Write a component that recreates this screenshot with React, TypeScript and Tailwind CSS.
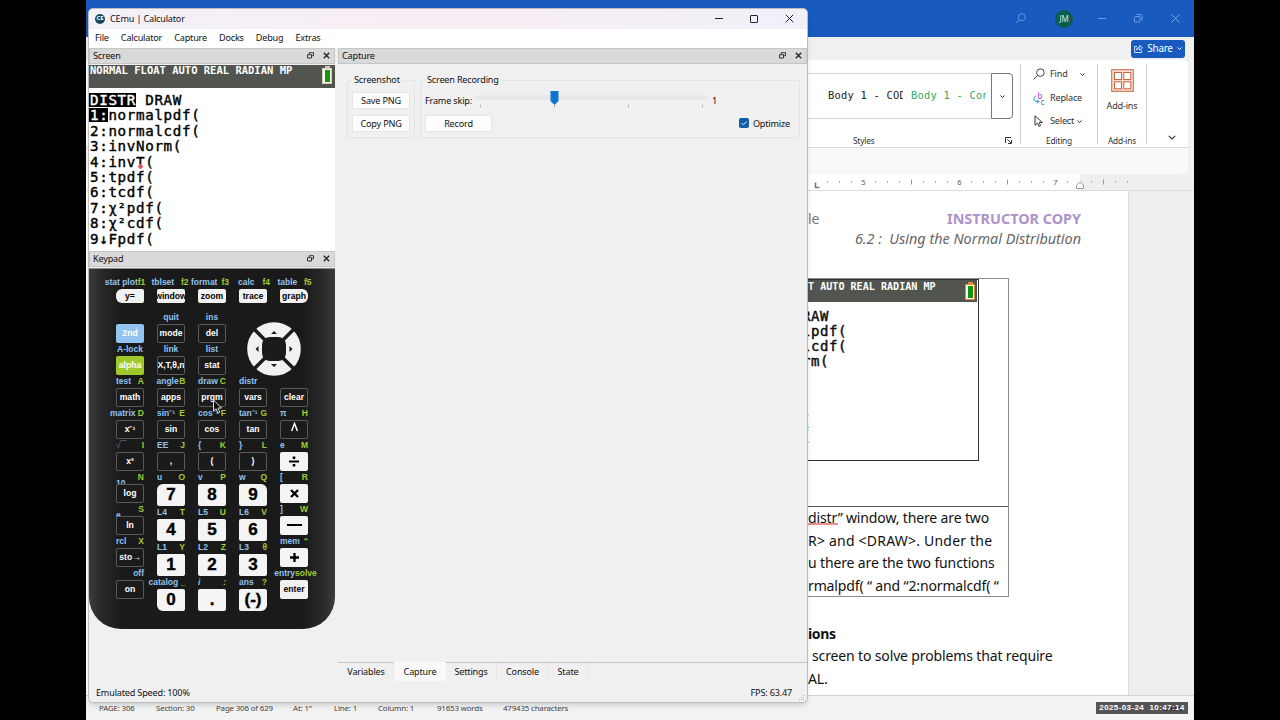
import React from "react";

type Label = { b?: string; g?: string; cls?: string };
type KeyDef = Label & { t: React.ReactNode; k?: string };

const DARK = "border border-[#5a5a5a] bg-[#1b1b1b] text-white text-[8.6px] rounded-[2px]";
const LIGHT = "bg-[#f1f1f1] text-black text-[8.6px] rounded-[2px]";
const OP = "bg-[#f4f4f4] text-black text-[17px] rounded-[2px]";

function Key({ def, tall }: { def: KeyDef; tall?: boolean }) {
  return (
    <div className="flex flex-col items-center">
      <div className="flex h-[13px] w-[28px] justify-center">
        <div
          className={
            "flex shrink-0 items-center whitespace-pre text-[8.5px] leading-[13px] " +
            (def.cls ?? "w-[28px] justify-between")
          }
        >
          {def.b !== undefined && <span className="text-[#8fc3ee]">{def.b}</span>}
          {def.g !== undefined && <span className="text-[#a0cc2e]">{def.g}</span>}
        </div>
      </div>
      <div
        className={
          "flex w-[28px] items-center justify-center overflow-hidden whitespace-nowrap " +
          (tall ? "h-[22px] bg-[#f4f4f4] text-[17px] text-black [-webkit-text-stroke:0.4px_#000] " : "h-[19px] ") +
          (tall ? def.k ?? "rounded-[2px]" : def.k ?? DARK)
        }
      >
        <span className="shrink-0">{def.t}</span>
      </div>
    </div>
  );
}

const C = "w-[28px] justify-center";

const topKeys: KeyDef[] = [
  { t: "y=", b: "stat plot", g: "f1", cls: "w-[52px] justify-center pr-[10px]", k: "rounded-l-[6px] rounded-r-[2px]" },
  { t: "window", b: "tblset", g: "f2", cls: "w-[37px] justify-between mr-[2px]", k: "rounded-[2px]" },
  { t: "zoom", b: "format", g: "f3", cls: "w-[38px] justify-between mr-[4px]", k: "rounded-[2px]" },
  { t: "trace", b: "calc", g: "f4", cls: "w-[32px] justify-between ml-[2px]", k: "rounded-[2px]" },
  { t: "graph", b: "table", g: "f5", cls: "w-[34px] justify-between ml-px", k: "rounded-l-[2px] rounded-r-[6px]" },
];

const col1: KeyDef[] = [
  { t: "2nd", b: " ", k: "bg-[#93c3f0] text-white text-[8.6px] rounded-[2px]" },
  { t: "alpha", b: "A-lock", cls: C, k: "bg-[#9fc92b] text-white text-[8.6px] rounded-[2px]" },
  { t: "math", b: "test", g: "A" },
  { t: <>x⁻¹</>, b: "matrix", g: "D", cls: "w-[34px] justify-between mr-[6px]" },
  { t: "x²", b: "√‾‾", g: "I", cls: "w-[28px] justify-between [&>span:first-child]:font-normal [&>span:first-child]:opacity-60" },
  { t: "log", b: "10", g: "N", cls: "w-[28px] justify-between [&>span:first-child]:mt-[8px] [&>span:first-child]:h-[9px]" },
  { t: "ln", b: "e", g: "S", cls: "w-[28px] justify-between [&>span:first-child]:mt-[9px] [&>span:first-child]:h-[9px]" },
  { t: "sto→", b: "rcl", g: "X" },
  { t: "on", b: "off", cls: "w-[28px] justify-end" },
];
const col2: KeyDef[] = [
  { t: "mode", b: "quit", cls: C },
  { t: "X,T,θ,n", b: "link", cls: C },
  { t: "apps", b: "angle", g: "B", cls: "w-[29px] justify-between" },
  { t: "sin", b: "sin⁻¹", g: "E" },
  { t: ",", b: "EE", g: "J" },
];
const col3: KeyDef[] = [
  { t: "del", b: "ins", cls: C },
  { t: "stat", b: "list", cls: C },
  { t: "prgm", b: "draw", g: "C" },
  { t: "cos", b: "cos⁻¹", g: "F" },
  { t: "(", b: "{", g: "K" },
];
const col4: KeyDef[] = [
  { t: "vars", b: "distr" },
  { t: "tan", b: "tan⁻¹", g: "G" },
  { t: ")", b: "}", g: "L" },
];
const num2: KeyDef[] = [
  { t: "7", b: "u", g: "O", k: "rounded-[2px] rounded-tl-[6px]" },
  { t: "4", b: "L4", g: "T" },
  { t: "1", b: "L1", g: "Y" },
  { t: "0", b: "catalog", g: "_", cls: "w-[37px] justify-between mr-[8px]", k: "rounded-[2px] rounded-bl-[6px]" },
];
const num3: KeyDef[] = [
  { t: "8", b: "v", g: "P" },
  { t: "5", b: "L5", g: "U" },
  { t: "2", b: "L2", g: "Z" },
  { t: ".", b: "i", g: ":", cls: "w-[28px] justify-between italic" },
];
const num4: KeyDef[] = [
  { t: "9", b: "w", g: "Q", k: "rounded-[2px] rounded-tr-[6px]" },
  { t: "6", b: "L6", g: "V" },
  { t: "3", b: "L3", g: "θ" },
  { t: "(-)", b: "ans", g: "?", k: "rounded-[2px] rounded-br-[6px]" },
];
const col5: KeyDef[] = [
  { t: "clear", b: " " },
  { t: <svg width="9" height="10" viewBox="0 0 9 10" className="mb-1"><path d="M1.6 9 4.5 1.5 7.4 9" fill="none" stroke="#fff" strokeWidth="1.5" /></svg>, b: "π", g: "H" },
  { t: <svg width="10" height="11" viewBox="0 0 10 11"><path d="M0 4.500h10v2H0zM3.700.5h2.600v2.600H3.700zM3.700 7.900h2.600v2.600H3.700z" /></svg>, b: "e", g: "M", k: OP },
  { t: <svg width="9" height="9" viewBox="0 0 9 9"><path d="m1 1 7 7M8 1 1 8" stroke="#000" strokeWidth="2.400" /></svg>, b: "[", g: "R", k: OP },
  { t: <div className="h-[1.5px] w-[15px] bg-black" />, b: "]", g: "W", k: OP },
  { t: <svg width="9" height="9" viewBox="0 0 9 9"><path d="M4.500 0v9M0 4.500h9" stroke="#000" strokeWidth="2.300" /></svg>, b: "mem", g: "“", k: OP },
  { t: "enter", b: "entry", g: "solve", cls: "w-[44px] justify-center ml-[3px]", k: LIGHT },
];

function Keys({ list, tall }: { list: KeyDef[]; tall?: boolean }) {
  return (
    <>
      {list.map((d, i) => (
        <Key key={i} def={d} tall={tall} />
      ))}
    </>
  );
}

function DPad() {
  return (
    <svg width="56" height="56" viewBox="-28 -28 56 56">
      <circle r="19.2" fill="none" stroke="#f1f1f1" strokeWidth="15.2" />
      <path d="M-20-20 20 20M20-20-20 20" stroke="#1b1b1b" strokeWidth="3.5" />
      <rect x="-12" y="-12" width="24" height="24" rx="8" fill="#1b1b1b" />
      <path d="M-3-15h6l-3-3zM-3 15h6l-3 3zM-15.500-3v6l-3-3zM15.500-3v6l3-3z" fill="#1b1b1b" />
    </svg>
  );
}

function Keypad() {
  return (
    <div className="relative mt-px flex h-[361px] w-[246px] flex-col rounded-b-[32px] border-t border-[#888] pl-[20.5px] pt-[7px] font-['Liberation_Sans',Arial,sans-serif] font-bold tracking-normal [background-image:linear-gradient(90deg,#3b3b3b_0%,#272727_6%,#1a1a1a_13%,#1a1a1a_87%,#272727_94%,#3b3b3b_100%)]">
      <div className="grid grid-cols-[repeat(5,41px)]">
        {topKeys.map((d, i) => (
          <div key={i} className="flex flex-col items-center">
            <div className="flex h-[13px] w-[28px] justify-center">
              <div className={"flex shrink-0 items-center whitespace-pre text-[8.5px] " + d.cls}>
                <span className="text-[#8fc3ee]">{d.b}</span>
                <span className="text-[#a0cc2e]">{d.g}</span>
              </div>
            </div>
            <div className={"flex h-[14px] w-[28px] items-center justify-center overflow-hidden bg-[#f1f1f1] text-[8.6px] text-black " + d.k}>
              <span className="shrink-0">{d.t}</span>
            </div>
          </div>
        ))}
      </div>
      <div className="mt-[7.5px] grid grid-cols-[repeat(3,41px)_82px]">
        <div><Keys list={col1} /></div>
        <div><Keys list={col2} /><Keys list={num2} tall /></div>
        <div><Keys list={col3} /><Keys list={num3} tall /></div>
        <div>
          <div className="flex h-[64px] justify-center pt-[10px]"><DPad /></div>
          <div className="grid grid-cols-[41px_41px]">
            <div><Keys list={col4} /><Keys list={num4} tall /></div>
            <div><Keys list={col5} /></div>
          </div>
        </div>
      </div>
      <svg className="absolute left-[123px] top-[130px]" width="11" height="16" viewBox="0 0 11 16">
        <path d="M1.500 1v11l2.600-2.300 1.800 4.300 1.900-.8-1.800-4.200h3.500z" fill="#111" stroke="#d8d8d8" strokeWidth="1" />
      </svg>
    </div>
  );
}

function DockTitle({ children }: { children: string }) {
  return (
    <div className="flex h-[16px] shrink-0 items-center border border-[#c6c6c6] bg-[#d9d9d9] pb-px pl-[3px] pr-[4px]">
      <span className="flex-1">{children}</span>
      <svg width="7" height="7" viewBox="0 0 7 7" className="mr-[9px]" fill="none" stroke="#222">
        <path d="M2.200 2.200V.7h4.300v3.100H5M.5 2.700h4v3.300h-4z" strokeWidth=".9" />
      </svg>
      <svg width="7" height="7" viewBox="0 0 7 7"><path d="m.8.8 5.400 5.400M6.200.8.8 6.200" stroke="#222" strokeWidth="1.300" /></svg>
    </div>
  );
}

function Battery({ rim }: { rim: string }) {
  return (
    <div className="flex flex-col items-center">
      <div className={"h-[2px] w-[5px] " + rim} />
      <div className={"flex h-[16px] w-[10px] items-center justify-center " + rim}>
        <div className="flex h-[14px] w-[8px] items-center justify-center bg-[#fbfbe8]">
          <div className="h-[12px] w-[5px] bg-[#119613]" />
        </div>
      </div>
    </div>
  );
}

const menuLines = ["2:normalcdf(", "3:invNorm(", "4:invT(", "5:tpdf(", "6:tcdf(", "7:χ²pdf(", "8:χ²cdf(", "9↓Fpdf("];

function CalcScreen() {
  return (
    <div className="relative mt-px flex h-[186px] flex-col bg-white font-['DejaVu_Sans_Mono',monospace] tracking-normal text-black">
      <div className="flex h-[23px] justify-between bg-[#52544f] pl-px pr-[3px]">
        <span className="text-[10.5px] font-bold leading-[11px] text-white">NORMAL FLOAT AUTO REAL RADIAN MP</span>
        <div className="pt-px"><Battery rim="bg-[#cfcfc8]" /></div>
      </div>
      <div className="mt-[5px] text-[14.2px] leading-[15.4px] tracking-[0.66px] [-webkit-text-stroke:0.4px_#000]">
        <div className="h-[15.4px] whitespace-pre"><span className="inline-block h-[14px] bg-black pl-px text-white [-webkit-text-stroke:0.4px_#fff]">DISTR</span> DRAW</div>
        <div className="flex h-[15.4px]"><span className="h-[14px] bg-black pl-px text-white [-webkit-text-stroke:0.4px_#fff]">1:</span>normalpdf(</div>
        {menuLines.map((l) => (
          <div key={l} className="h-[15.4px] pl-px">{l}</div>
        ))}
      </div>
      <div className="absolute left-[49px] top-[99px] size-[5px] rounded-full border border-[#ee7f8c] bg-[#d2485a]" />
    </div>
  );
}

function Btn({ children, cls }: { children: string; cls: string }) {
  return <div className={"flex h-[17px] items-center justify-center rounded-[1px] border border-[#e6e6e6] bg-[#fdfdfd] " + cls}>{children}</div>;
}

function CapturePanel() {
  return (
    <div className="flex gap-[5px] pl-[9px] pr-[7px] pt-[10px]">
      <div className="flex h-[64px] w-[68px] flex-col">
        <div className="z-10 ml-[5px] h-[12px] self-start bg-[#f0f0f0] px-[2px] leading-[12px]">Screenshot</div>
        <div className="-mt-[6px] flex flex-1 flex-col gap-[6px] rounded-[2px] border border-[#e4e4e4] pl-[4px] pt-[11px]">
          <Btn cls="w-[58px]">Save PNG</Btn>
          <Btn cls="w-[58px]">Copy PNG</Btn>
        </div>
      </div>
      <div className="flex h-[64px] flex-1 flex-col">
        <div className="z-10 ml-[5px] h-[12px] self-start bg-[#f0f0f0] px-[2px] leading-[12px]">Screen Recording</div>
        <div className="-mt-[6px] flex flex-1 flex-col gap-[6px] rounded-[2px] border border-[#e4e4e4] pl-[4px] pt-[11px]">
          <div className="flex h-[17px] items-center">
            <span className="w-[51px]">Frame skip:</span>
            <svg width="232" height="17" viewBox="0 0 232 17" className="-mt-[3px]">
              <rect x=".5" y="5" width="230" height="3" fill="#e9e9e9" stroke="#dedede" strokeWidth=".6" />
              <path d="M4.500 13.500v3M78.500 13.500v3M152.500 13.500v3M226.500 13.500v3" stroke="#b8b8b8" />
              <path d="M74.500 0h8v10l-4 4-4-4z" fill="#0a78d2" />
            </svg>
            <span className="ml-[4px]">1</span>
          </div>
          <div className="flex items-center justify-between pr-[9px]">
            <Btn cls="w-[67px]">Record</Btn>
            <div className="flex items-center gap-[4px]">
              <svg width="10" height="10" viewBox="0 0 10 10"><rect width="10" height="10" rx="2" fill="#0f5ea8" /><path d="m2.500 5 1.800 1.800L7.700 3.500" fill="none" stroke="#dcebf8" /></svg>
              <span>Optimize</span>
            </div>
          </div>
        </div>
      </div>
    </div>
  );
}

function CEmuWindow() {
  return (
    <div className="absolute left-[88px] top-[8px] flex h-[695px] w-[720px] flex-col overflow-hidden rounded-[5px] border border-[#bcbcbc] bg-[#f0f0f0] text-[9.1px] tracking-[-0.02em] text-[#111] shadow-md">
      <div className="flex h-[20px] shrink-0 items-center bg-linear-to-r from-[#f4f1f8] via-[#f8edf5] to-[#f1f0f8] pb-px pl-[6px] pr-[13px]">
        <div className="mr-[5px] flex size-[10px] items-center justify-center rounded-full bg-[#174a58] text-[6px] font-bold text-white">CE</div>
        <span className="flex-1">CEmu | Calculator</span>
        <div className="flex items-center gap-[27px] text-[#222]">
          <div className="h-px w-[8px] bg-current" />
          <div className="size-[8px] rounded-[1px] border border-current" />
          <svg width="9" height="9" viewBox="0 0 9 9"><path d="m.7.7 7.600 7.600M8.300.7.7 8.300" stroke="#222" /></svg>
        </div>
      </div>
      <div className="flex h-[19px] shrink-0 items-center gap-[12px] bg-white pb-px pl-[6px]">
        {["File", "Calculator", "Capture", "Docks", "Debug", "Extras"].map((m) => <span key={m}>{m}</span>)}
      </div>
      <div className="flex flex-1 gap-[3px]">
        <div className="flex w-[246px] flex-col">
          <DockTitle>Screen</DockTitle>
          <CalcScreen />
          <DockTitle>Keypad</DockTitle>
          <Keypad />
        </div>
        <div className="flex flex-1 flex-col">
          <DockTitle>Capture</DockTitle>
          <div className="flex-1"><CapturePanel /></div>
          <div className="flex h-[19px] border-t border-[#c4c4c4] pl-[1px]">
            <div className="w-[55px] border-r border-[#e8e8e8] text-center leading-[18px]">Variables</div>
            <div className="-mt-px w-[52px] bg-[#f9f9f9] text-center leading-[20px]">Capture</div>
            <div className="w-[51px] border-r border-[#e8e8e8] text-center leading-[18px]">Settings</div>
            <div className="w-[52px] border-r border-[#e8e8e8] text-center leading-[18px]">Console</div>
            <div className="w-[39px] border-r border-[#e8e8e8] text-center leading-[18px]">State</div>
          </div>
        </div>
      </div>
      <div className="flex h-[21px] shrink-0 items-center justify-between pl-[7px] pr-[2px] pt-[2px]">
        <span>Emulated Speed: 100%</span>
        <div className="flex items-end gap-[7px]">
          <span>FPS: 63.47</span>
          <svg width="6" height="6" viewBox="0 0 6 6" className="-mb-[2px]" fill="#aaa"><path d="M4 0h1v1H4zM4 2h1v1H4zM2 2h1v1H2zM4 4h1v1H4zM2 4h1v1H2zM0 4h1v1H0z" /></svg>
        </div>
      </div>
    </div>
  );
}

function Chevron({ s = 5, c = "#333" }: { s?: number; c?: string }) {
  return <svg width={s} height={s * 0.6} viewBox="0 0 10 6"><path d="m1 1 4 4 4-4" fill="none" stroke={c} strokeWidth={s > 6 ? 1.4 : 2} /></svg>;
}

function Magnifier({ c, s }: { c: string; s: number }) {
  return <svg width={s} height={s} viewBox="0 0 12 12" fill="none" stroke={c}><circle cx="7.400" cy="4.600" r="3.800" /><path d="M4.600 7.400.6 11.400" /></svg>;
}

function Ribbon() {
  return (
    <div className="flex h-[88px] border-b border-[#dcdcdc] bg-white pl-[722px] text-[9.1px] tracking-[-0.02em] text-[#333]">
      <div className="mb-[3px] mt-[4px] flex w-[213px] flex-col border-r border-[#cfcfcf]">
        <div className="mt-[9px] flex h-[46px] w-[205px]">
          <div className="flex flex-1 items-center gap-[8px] overflow-hidden border-y border-[#d4d4d4] pl-[20px] font-['DejaVu_Sans_Mono',monospace] text-[10.4px] tracking-[0.25px] text-[#222]">
            <span className="w-[75px] shrink-0 overflow-hidden whitespace-nowrap">Body 1 - COD</span>
            <span className="w-[75px] shrink-0 overflow-hidden whitespace-nowrap text-[#2fa866]">Body 1 - Con</span>
          </div>
          <div className="flex w-[22px] items-center justify-center rounded-r-[4px] border border-[#777]"><Chevron /></div>
        </div>
        <div className="flex flex-1 items-end justify-between pl-[45px] pr-[8px] text-[8.3px] leading-[7px]">
          <span>Styles</span>
          <svg width="7" height="7" viewBox="0 0 7 7" fill="none" stroke="#333"><path d="M.5 6V.5H6M2.500 2.500l3.500 3.500M6.500 3v3.500H3" /></svg>
        </div>
      </div>
      <div className="mb-[3px] mt-[4px] flex w-[77px] flex-col border-r border-[#cfcfcf]">
        <div className="flex h-[20px] items-center pl-[12px]">
          <Magnifier c="#444" s={12} /><span className="ml-[5px] w-[30px]">Find</span><Chevron />
        </div>
        <div className="mt-[3px] flex h-[22px] items-center pl-[12px]">
          <svg width="12" height="13" viewBox="0 0 12 13"><text x="4.500" y="6.500" fontSize="8" fill="#a646b8">b</text><text x="7.500" y="12.500" fontSize="8" fill="#2788c8">c</text><path d="M3.500 4C.5 4.500.2 8.500 3 9.500h2.500M4 7.500l2 2-2 2" fill="none" stroke="#2788c8" /></svg>
          <span className="ml-[5px]">Replace</span>
        </div>
        <div className="mt-[1px] flex h-[22px] items-center pl-[12px]">
          <svg width="12" height="12" viewBox="0 0 12 12"><path d="M2 .8v9.500l2.500-2.200 1.400 3.300 1.700-.7-1.400-3.200h3.200z" fill="none" stroke="#333" /></svg>
          <span className="ml-[5px] mr-[3px]">Select</span><Chevron />
        </div>
        <div className="mt-auto text-center text-[8.3px] leading-[7px]">Editing</div>
      </div>
      <div className="mb-[3px] mt-[4px] flex w-[49px] flex-col items-center border-r border-[#cfcfcf]">
        <svg width="23" height="23" viewBox="0 0 23 23" className="mt-[5px]" fill="#fff" stroke="#c8663f"><rect x=".7" y=".7" width="21.600" height="21.600" fill="#f6dccf" /><rect x="3.500" y="3.500" width="7" height="7" /><rect x="12.800" y="3.500" width="7" height="7" /><rect x="3.500" y="12.800" width="7" height="7" /><rect x="12.800" y="12.800" width="7" height="7" /></svg>
        <span className="mt-[7px]">Add-ins</span>
        <span className="mt-auto text-[8.3px] leading-[7px]">Add-ins</span>
      </div>
      <div className="flex flex-1 items-end justify-end pb-[7px] pr-[12px]"><Chevron s={8} /></div>
    </div>
  );
}

function Ruler() {
  return (
    <div className="flex h-[17px] shrink-0 items-center border-b border-[#dcdcdc] bg-[#efefef]">
      <div className="flex h-full w-[994px] bg-white pl-[722px]">
        <svg width="272" height="16" viewBox="0 0 272 16" className="overflow-visible" fontSize="7.500" fill="#555" textAnchor="middle">
          <path d="M7.500 8.500v5h4" fill="none" stroke="#777" strokeWidth="1.600" />
          <path d="M19.500 7v1.500M31.500 7v1.500M43.500 7v1.500M67.500 7v1.500M79.500 7v1.500M91.500 7v1.500M103.500 5.500v5M115.500 7v1.500M127.500 7v1.500M139.500 7v1.500M163.500 7v1.500M175.500 7v1.500M187.500 7v1.500M199.500 5.500v5M211.500 7v1.500M223.500 7v1.500M235.500 7v1.500M259.500 7v1.500M283.500 7v1.500M295.500 5.500v5M307.500 7v1.500M319.500 7v1.500" stroke="#999" />
          <text x="55.500" y="10.500">5</text><text x="151.500" y="10.500">6</text><text x="247.500" y="10.500">7</text>
          <path d="M268.500 14.500v-3.500l3.500-3 3.500 3v3.500z" fill="#fff" stroke="#999" />
        </svg>
      </div>
    </div>
  );
}

function Page() {
  return (
    <div className="flex h-[504px] shrink-0 overflow-hidden bg-[#efefef]">
      <div className="flex w-[1043px] flex-col border-r border-[#dcdcdc] bg-white pl-[722px] text-[14px] leading-[22.5px] tracking-[-0.01em] text-[#111]">
        <div className="mt-[18px] flex h-[20px] w-[273px] justify-between leading-[20px]">
          <span className="text-[#777]">le</span>
          <span className="text-[14.4px] font-bold tracking-normal text-[#ad93c9]">INSTRUCTOR COPY</span>
        </div>
        <div className="h-[20px] w-[273px] whitespace-pre text-right text-[14.4px] italic leading-[20px] tracking-normal text-[#666]">6.2 :  Using the Normal Distribution</div>
        <div className="mt-[29px] flex h-[319px] w-[201px] shrink-0 flex-col border border-l-0 border-[#8c8c8c]">
          <div className="h-[228px] shrink-0 border-b border-[#555]">
            <div className="h-[182px] w-[171px] overflow-hidden border-b border-r border-t border-[#333] font-['DejaVu_Sans_Mono',monospace] tracking-normal">
              <div className="mr-px flex h-[22px] justify-between bg-[#52544f] pr-[2px]">
                <span className="whitespace-pre text-[10.1px] font-bold leading-[13px] text-white">T AUTO REAL RADIAN MP</span>
                <div className="pt-[2px]"><Battery rim="bg-[#d98f3c]" /></div>
              </div>
              <div className="mt-[6.5px] whitespace-pre text-[14px] leading-[15px] tracking-[0.6px] [-webkit-text-stroke:0.4px_#000]">
                <div className="-ml-[6px]">RAW</div>
                <div className="-ml-[6px]">lpdf(</div>
                <div className="-ml-[6px]">lcdf(</div>
                <div className="-ml-[6px]">rm(</div>
              </div>
              <div className="-ml-[6px] mt-[45px] text-[14px] leading-[15px] [-webkit-text-stroke:0.4px_#000]"><div>(</div><div>(</div></div>
            </div>
          </div>
          <div className="whitespace-nowrap">
            <div><span className="bg-[radial-gradient(circle,#d9534f_0.6px,transparent_0.9px)] bg-[length:2px_2px] bg-[position:0_calc(100%-2px)] bg-repeat-x">distr</span>” window, there are two</div>
            <div className="tracking-[0.015em]">R&gt; and &lt;DRAW&gt;. Under the</div>
            <div>u there are the two functions</div>
            <div>rmalpdf( “ and “2:normalcdf( “</div>
          </div>
        </div>
        <div className="mt-[25.5px] font-bold tracking-[-0.025em]">ions</div>
        <div className="pl-[4px]">screen to solve problems that require</div>
        <div>AL.</div>
      </div>
    </div>
  );
}

function WordWindow() {
  return (
    <div className="flex h-[720px] w-[1108px] flex-col bg-[#f0f0f0]">
      <div className="flex h-[37px] shrink-0 items-center justify-end bg-[#185abd] pr-[14px]">
        <Magnifier c="#6f9be0" s={11} />
        <div className="ml-[29px] mr-[25px] flex size-[18px] items-center justify-center rounded-full bg-[#0b5c4b] text-[8px] tracking-tight text-[#d7e8e4]">JM</div>
        <div className="h-px w-[8px] bg-[#6f9be0]" />
        <svg width="9" height="9" viewBox="0 0 9 9" className="mx-[28px]" fill="none" stroke="#6f9be0"><rect x=".5" y="2.500" width="5.500" height="5.500" rx="1" /><path d="M2.500.5H7q1 0 1 1V6.500" /></svg>
        <svg width="9" height="9" viewBox="0 0 9 9"><path d="m.5.5 8 8M8.500.5l-8 8" stroke="#7fa6e4" /></svg>
      </div>
      <div className="flex h-[23px] shrink-0 items-center justify-end pr-[9px]">
        <div className="flex h-[18px] w-[54px] items-center justify-center gap-[4px] rounded-[3px] bg-[#185abd] text-[9.900px] text-white">
          <svg width="9" height="9" viewBox="0 0 9 9" fill="none" stroke="#fff" strokeWidth=".8"><path d="M3 2.500H.6v6h7V6.500M2.500 6c.3-2 1.500-2.800 3.300-2.800V1.200L8.500 4 5.800 6.300V4.700C4.500 4.700 3.300 5 2.500 6z" /></svg>
          <span className="tracking-tight">Share</span><Chevron s={5} c="#fff" />
        </div>
      </div>
      <div className="mr-[6px] shrink-0 overflow-hidden rounded-r-[5px] bg-[#f9f9f9]">
        <Ribbon />
        <div className="h-[26px]" />
      </div>
      <Ruler />
      <Page />
      <div className="flex flex-1 items-center border-t border-[#d2d2d2] bg-[#f3f3f3] pl-[13px] pt-px text-[7.900px] tracking-[-0.02em] text-[#444]">
        <span className="w-[57px]">PAGE: 306</span>
        <span className="w-[60px]">Section: 30</span>
        <span className="w-[77px]">Page 306 of 629</span>
        <span className="w-[41px]">At: 1"</span>
        <span className="w-[44px]">Line: 1</span>
        <span className="w-[59px]">Column: 1</span>
        <span className="w-[66px]">91653 words</span>
        <span className="flex-1">479435 characters</span>
        <div className="relative mb-px mr-[6px] flex h-[12px] w-[92px] items-center justify-center bg-[#555] font-['Liberation_Sans',Arial,sans-serif] text-[8px] font-bold tracking-[0.4px] text-white">
          <span className="absolute right-[6px] top-[2px] text-[7px] font-normal tracking-normal text-[#222]">100%</span>
          <span className="relative whitespace-pre">2025-03-24  10:47:14</span>
        </div>
      </div>
    </div>
  );
}

export default function App() {
  return (
    <div className="relative h-[720px] w-[1280px] overflow-hidden bg-black pl-[86px] font-['Noto_Sans','Open_Sans',sans-serif]">
      <WordWindow />
      <CEmuWindow />
    </div>
  );
}
